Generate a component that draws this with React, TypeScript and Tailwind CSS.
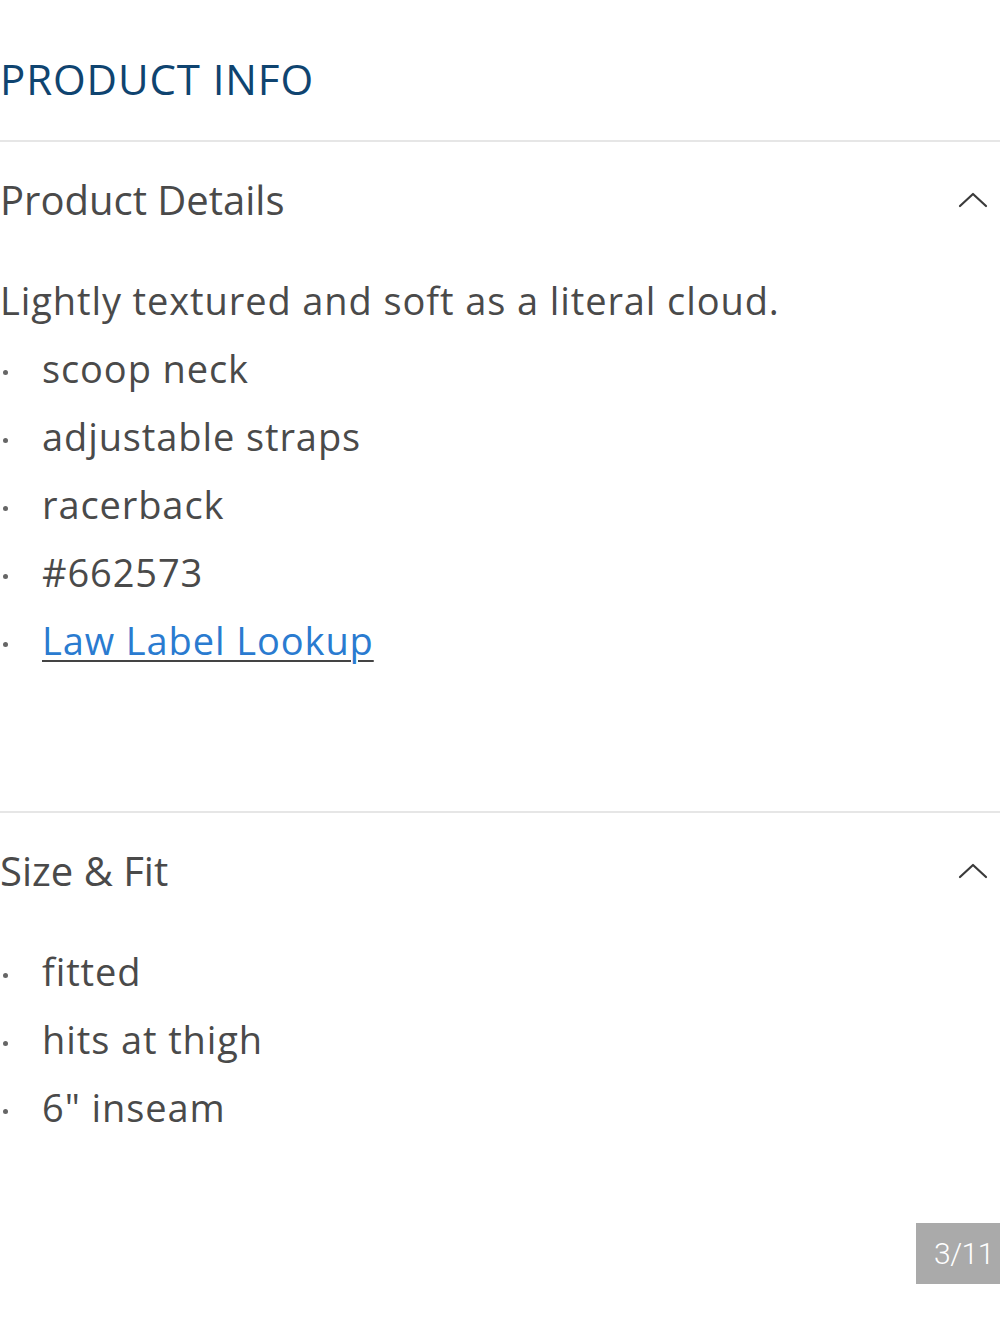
import React from "react";

type Item = { text: string; href?: boolean };

const details: Item[] = [
  { text: "scoop neck" },
  { text: "adjustable straps" },
  { text: "racerback" },
  { text: "#662573" },
  { text: "Law Label Lookup", href: true },
];

const fit: Item[] = [{ text: "fitted" }, { text: "hits at thigh" }, { text: '6" inseam' }];

function Chevron() {
  return (
    <svg width="30" height="18" viewBox="0 0 30 18" fill="none" aria-hidden>
      <polyline points="2,15 15,3 28,15" stroke="#3a3a3a" strokeWidth="2.2" strokeLinecap="round" strokeLinejoin="round" />
    </svg>
  );
}

function Bullets({ items }: { items: Item[] }) {
  return (
    <ul className="flex flex-col">
      {items.map((item) => (
        <li key={item.text} className="flex h-[68px] items-center">
          <span className="ml-[3px] mt-[8px] h-[5px] w-[5px] rounded-full bg-[#666]" />
          <span className="ml-[34px]">
            {item.href ? (
              <a href="#" className="text-[#2a7bd0] underline decoration-[#444] decoration-2 underline-offset-[5px]">
                {item.text}
              </a>
            ) : (
              item.text
            )}
          </span>
        </li>
      ))}
    </ul>
  );
}

function Header({ title }: { title: string }) {
  return (
    <div className="flex h-[116px] items-center justify-between pr-[12px]">
      <h3 className="text-[40px] leading-none tracking-normal">{title}</h3>
      <Chevron />
    </div>
  );
}

export default function App() {
  return (
    <div className="min-h-[1333px] bg-white text-[38px] tracking-[0.9px] text-[#4a4a4a] [font-family:'Open_Sans',sans-serif]">
      <div className="flex h-[142px] flex-col border-b-2 border-[#e6e6e6] pt-[52px]">
        <h2 className="text-[42px] leading-[54px] tracking-[0.9px] text-[#0f4470]">PRODUCT INFO</h2>
      </div>

      <section className="border-b-2 border-[#e6e6e6]">
        <Header title="Product Details" />
        <div className="pb-[137px] pt-[8px]">
          <p className="leading-[68px]">Lightly textured and soft as a literal cloud.</p>
          <Bullets items={details} />
        </div>
      </section>

      <section>
        <Header title="Size & Fit" />
        <div className="pt-[8px]">
          <Bullets items={fit} />
        </div>
        <div className="mt-[82px] flex justify-end">
          <div className="flex h-[61px] w-[84px] items-center bg-[#aaaaaa] pl-[18px] text-[30px] font-light tracking-[-0.5px] text-white [font-family:Roboto,sans-serif]">
            3/11
          </div>
        </div>
      </section>
    </div>
  );
}
